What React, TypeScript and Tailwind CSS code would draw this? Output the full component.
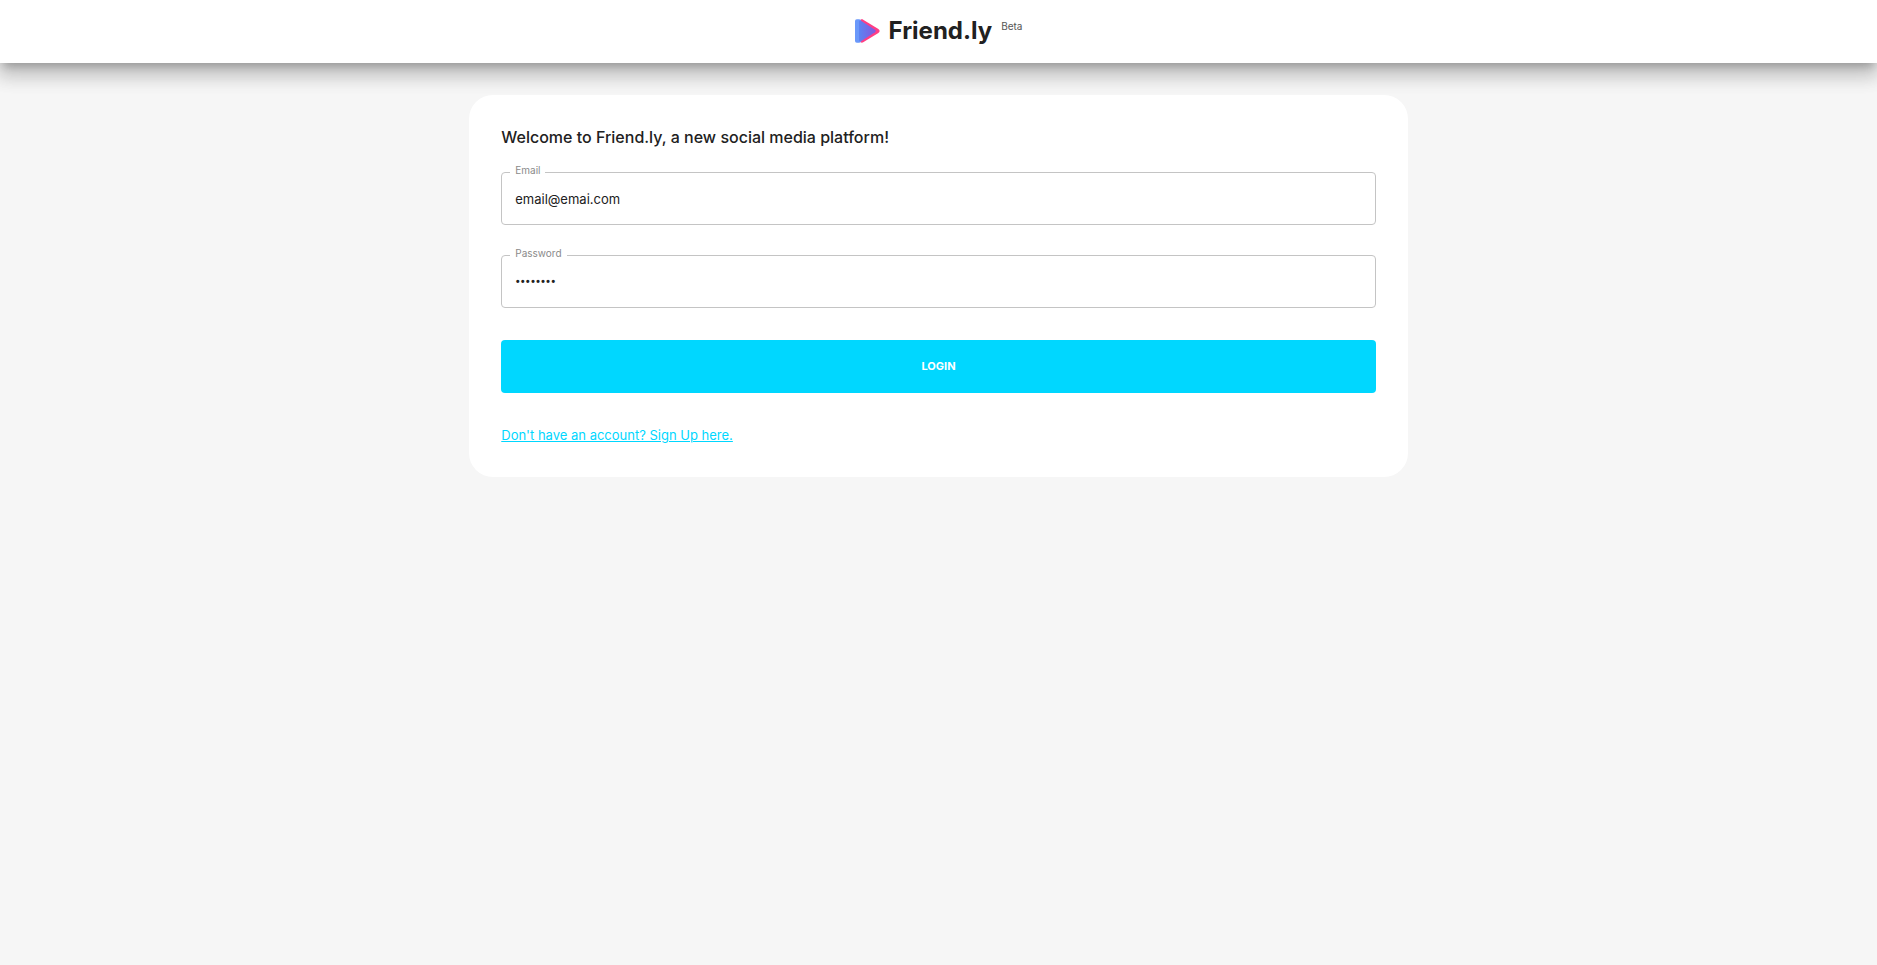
import { useState } from "react";

type FieldProps = {
  id: string;
  label: string;
  type: string;
  value: string;
  onChange: (value: string) => void;
};

function Field({ id, label, type, value, onChange }: FieldProps) {
  return (
    <div className="relative">
      <label
        htmlFor={id}
        className="absolute -top-[9px] left-[9px] bg-white px-[5px] text-[10px] leading-[14px] text-[#8a8a8a]"
      >
        {label}
      </label>
      <input
        id={id}
        type={type}
        value={value}
        onChange={(event) => onChange(event.target.value)}
        className="block h-[53px] w-full rounded border border-[#c4c4c4] bg-white px-[13px] text-[13px] text-[#212121] outline-none focus:border-[#00d7ff] [&[type=password]]:font-['Roboto',sans-serif] [&[type=password]]:text-[15px]"
      />
    </div>
  );
}

function Logo() {
  return (
    <svg viewBox="0 0 25 24" className="h-6 w-[25px]" aria-hidden="true">
      <defs>
        <linearGradient id="play" x1="0" y1="0" x2="1" y2="0">
          <stop offset="0" stopColor="#5b84f2" />
          <stop offset="1" stopColor="#8456dc" />
        </linearGradient>
      </defs>
      <path
        d="M5 2.200C5 .5 6.800-.1 8.200.7L23.400 10.100C25 11.100 25 12.900 23.400 13.900L8.200 23.300C6.800 24.100 5 23.500 5 21.800Z"
        fill="#ff3d84"
      />
      <rect x="0" y="0.300" width="6" height="23.400" rx="1.800" fill="#6a98fa" />
      <path
        d="M4 2.400C4 1.400 5 1.200 6 1.800L20 10.800C21 11.500 21 12.500 20 13.200L6 22.200C5 22.800 4 22.600 4 21.600Z"
        fill="url(#play)"
      />
    </svg>
  );
}

export default function App() {
  const [email, setEmail] = useState("email@emai.com");
  const [password, setPassword] = useState("password");

  return (
    <div className="min-h-screen bg-[#f6f6f6] font-['Inter',sans-serif] text-[#212121]">
      <header className="flex h-[63px] items-center justify-center gap-[9px] bg-white pb-[2px] shadow-[0_7px_8px_-4px_rgba(0,0,0,0.2),0_12px_17px_2px_rgba(0,0,0,0.14),0_5px_22px_4px_rgba(0,0,0,0.12)]">
        <Logo />
        <h1 className="text-2xl font-bold">Friend.ly</h1>
        <span className="mb-[10px] text-[10px] leading-3 text-[#555555]">Beta</span>
      </header>
      <main className="mx-auto mt-8 w-1/2 rounded-3xl bg-white p-8">
        <h2 className="text-base leading-[21px] font-medium">
          Welcome to Friend.ly, a new social media platform!
        </h2>
        <form className="mt-6" onSubmit={(event) => event.preventDefault()}>
          <div className="grid gap-[30px]">
            <Field id="email" label="Email" type="email" value={email} onChange={setEmail} />
            <Field
              id="password"
              label="Password"
              type="password"
              value={password}
              onChange={setPassword}
            />
          </div>
          <button
            type="submit"
            className="mt-8 block h-[53px] w-full rounded bg-[#00d7ff] text-[11px] font-bold text-white"
          >
            LOGIN
          </button>
        </form>
        <a
          href="#signup"
          className="mt-8 block w-fit text-[13px] leading-5 text-[#00d7ff] underline"
        >
          Don't have an account? Sign Up here.
        </a>
      </main>
    </div>
  );
}
